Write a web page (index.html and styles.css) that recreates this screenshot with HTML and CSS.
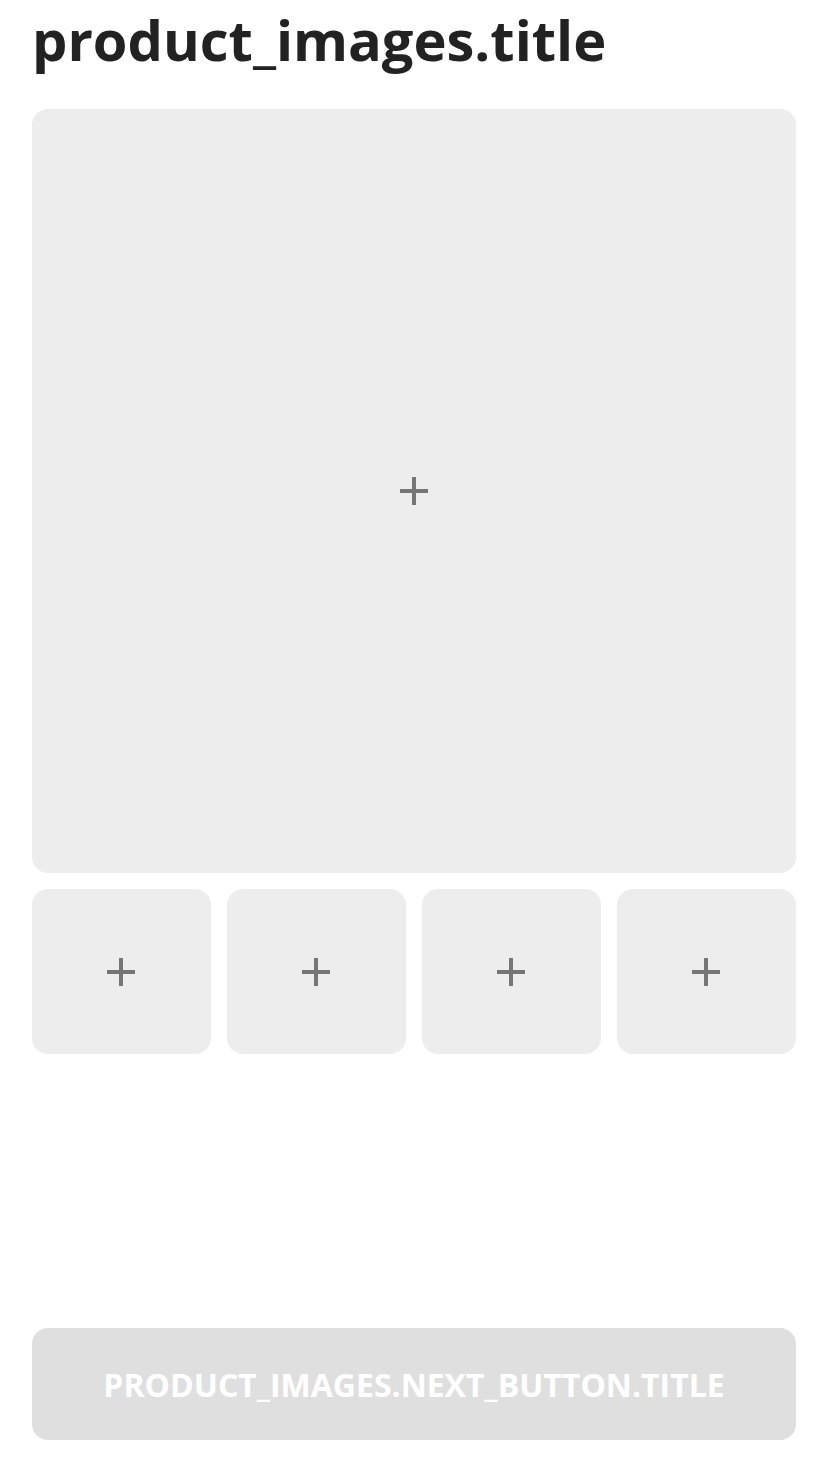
FILE: index.html
```html
<!DOCTYPE html>
<html>
<head>
<meta charset="utf-8">
<link rel="stylesheet" href="styles.css">
</head>
<body>
<div class="page">
  <h1 class="title">product_images.title</h1>
  <div class="main-slot">
    <svg class="plus" width="28" height="28" viewBox="0 0 28 28"><rect x="12" y="0" width="4" height="28" fill="#757575"/><rect x="0" y="12" width="28" height="4" fill="#757575"/></svg>
  </div>
  <div class="thumbs">
    <div class="thumb"><svg class="plus plus-small" width="28" height="28" viewBox="0 0 28 28"><rect x="12" y="0" width="4" height="28" fill="#757575"/><rect x="0" y="12" width="28" height="4" fill="#757575"/></svg></div>
    <div class="thumb"><svg class="plus plus-small" width="28" height="28" viewBox="0 0 28 28"><rect x="12" y="0" width="4" height="28" fill="#757575"/><rect x="0" y="12" width="28" height="4" fill="#757575"/></svg></div>
    <div class="thumb"><svg class="plus plus-small" width="28" height="28" viewBox="0 0 28 28"><rect x="12" y="0" width="4" height="28" fill="#757575"/><rect x="0" y="12" width="28" height="4" fill="#757575"/></svg></div>
    <div class="thumb"><svg class="plus plus-small" width="28" height="28" viewBox="0 0 28 28"><rect x="12" y="0" width="4" height="28" fill="#757575"/><rect x="0" y="12" width="28" height="4" fill="#757575"/></svg></div>
  </div>
  <button class="next">PRODUCT_IMAGES.NEXT_BUTTON.TITLE</button>
</div>
</body>
</html>
```

FILE: styles.css
```css
html, body {
  margin: 0;
  padding: 0;
  background: #ffffff;
}
.page {
  box-sizing: border-box;
  min-height: 1472px;
  padding: 0 32px 32px 32px;
  display: flex;
  flex-direction: column;
  font-family: "Open Sans", "Liberation Sans", sans-serif;
}
.title {
  margin: 0;
  height: 109px;
  font-size: 56px;
  font-weight: 700;
  line-height: 78px;
  color: #222222;
  letter-spacing: 0;
}
.main-slot {
  height: 764px;
  background: #ededed;
  border-radius: 16px;
  display: flex;
  align-items: center;
  justify-content: center;
}
.thumbs {
  margin-top: 16px;
  display: grid;
  grid-template-columns: repeat(4, 1fr);
  gap: 16px;
}
.thumb {
  height: 165px;
  background: #ededed;
  border-radius: 16px;
  display: flex;
  align-items: center;
  justify-content: center;
}
.plus {
  display: block;
}
.plus-small {
  margin-right: 1px;
  margin-top: 1px;
}
.next {
  margin-top: auto;
  height: 112px;
  border: none;
  border-radius: 16px;
  background: #dfdfdf;
  color: #ffffff;
  font-family: "Open Sans", "Liberation Sans", sans-serif;
  font-weight: 700;
  font-size: 32px;
  padding: 0;
}
```
